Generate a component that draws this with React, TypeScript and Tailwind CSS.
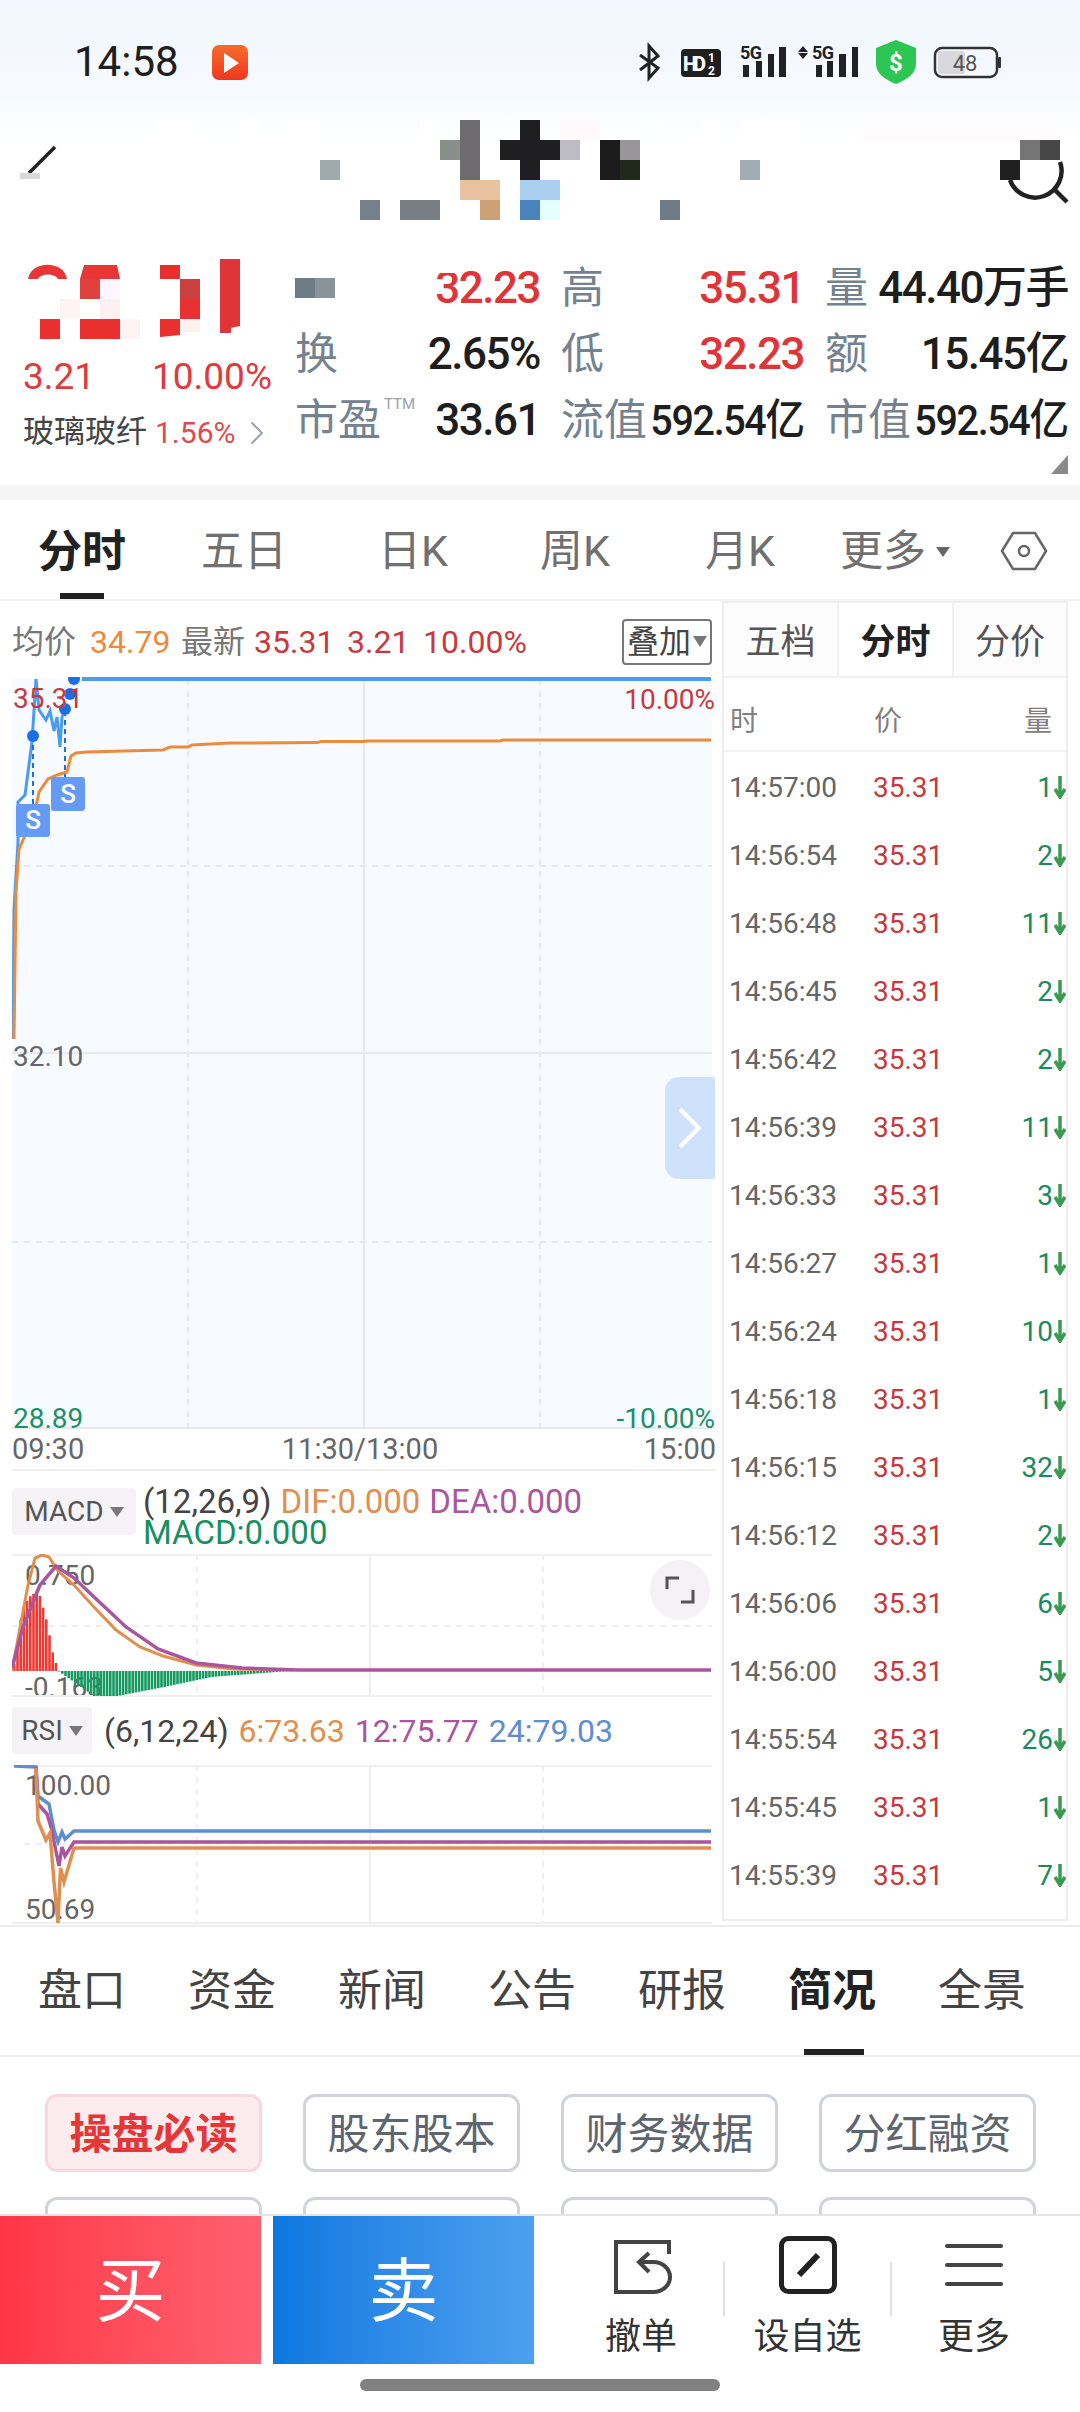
import { ChevronRight } from "lucide-react";

const trades = [
  ["14:57:00", "1"],
  ["14:56:54", "2"],
  ["14:56:48", "11"],
  ["14:56:45", "2"],
  ["14:56:42", "2"],
  ["14:56:39", "11"],
  ["14:56:33", "3"],
  ["14:56:27", "1"],
  ["14:56:24", "10"],
  ["14:56:18", "1"],
  ["14:56:15", "32"],
  ["14:56:12", "2"],
  ["14:56:06", "6"],
  ["14:56:00", "5"],
  ["14:55:54", "26"],
  ["14:55:45", "1"],
  ["14:55:39", "7"],
];

const periodTabs = [
  { label: "分时", w: "w-[164px]", active: true },
  { label: "五日", w: "w-[160px]" },
  { label: "日K", w: "w-[178px]" },
  { label: "周K", w: "w-[146px]" },
  { label: "月K", w: "w-[184px]" },
];

const infoTabs = ["盘口", "资金", "新闻", "公告", "研报", "简况", "全景"];
const chips = ["操盘必读", "股东股本", "财务数据", "分红融资"];

// mosaic over the stock name, page coords
const titleMosaic: [number, number, number, number, string][] = [
  [155, 120, 45, 20, "#ffffff"],
  [240, 120, 20, 20, "#ffffff"],
  [280, 120, 40, 20, "#ffffff"],
  [420, 120, 20, 20, "#ffffff"],
  [560, 120, 40, 20, "#fff9fb"],
  [640, 120, 20, 20, "#fbffff"],
  [700, 120, 20, 20, "#ffffff"],
  [740, 120, 60, 20, "#ffffff"],
  [860, 120, 200, 20, "#fffcfe"],
  [460, 120, 20, 60, "#6d6b6e"],
  [440, 140, 20, 20, "#8b8d88"],
  [520, 120, 20, 60, "#1f1f22"],
  [500, 140, 60, 20, "#1f1f22"],
  [560, 140, 20, 20, "#bdbcc4"],
  [600, 140, 20, 40, "#1c1c1c"],
  [620, 140, 20, 20, "#979597"],
  [620, 160, 20, 20, "#1f2a1d"],
  [320, 160, 20, 20, "#a0a9ae"],
  [740, 160, 20, 20, "#a0adb2"],
  [360, 200, 20, 20, "#75808a"],
  [400, 200, 40, 20, "#777f85"],
  [460, 180, 40, 20, "#e8c29f"],
  [480, 200, 20, 20, "#cd9f74"],
  [520, 180, 40, 20, "#abcff0"],
  [520, 200, 20, 20, "#4a82ba"],
  [540, 200, 20, 20, "#e4ffff"],
  [660, 200, 20, 20, "#6d7b86"],
  [1020, 140, 20, 20, "#757575"],
  [1040, 140, 20, 20, "#474747"],
  [1000, 160, 20, 20, "#202020"],
];

const blueLine = "M13 1040 L14 910 L18 843 L18 803 L25 796 L32 743 L36 680 L39 711 L46 721 L50 712 L54 732 L57 718 L60 748 L62 718 L65 711";
const avgLine = "M14 1040 L16 893 L19 850 L28 830 L37 803 L39 793 L48 780 L57 776 L67 773 L71 757 L76 754 L87 753 L124 752 L163 751 L170 748 L188 748 L192 746 L230 744 L317 743.6 L321 742.5 L363 742.5 L367 742 L500 742 L503 741 L711 741";

function lerp(points: [number, number][], x: number) {
  for (let i = 1; i < points.length; i++) {
    if (x <= points[i][0]) {
      const [x0, y0] = points[i - 1];
      const [x1, y1] = points[i];
      return y0 + ((y1 - y0) * (x - x0)) / (x1 - x0);
    }
  }
  return points[points.length - 1][1];
}

const redEnv: [number, number][] = [[12, 1672], [21, 1610], [28, 1598], [37, 1591], [46, 1624], [51, 1652], [57, 1672]];
const greenEnv: [number, number][] = [[57, 1672], [93, 1697], [116, 1697], [163, 1688], [210, 1678], [288, 1672]];

function MainChart() {
  return (
    <div className="relative h-[752px] w-[700px]">
      <svg viewBox="12 678 700 752" className="block h-full w-full">
        <rect x="12" y="680" width="700" height="750" fill="#f7faff" />
        <g stroke="#e6eaf0" strokeWidth="2" fill="none">
          <path d="M12 1054H712M364 680V1430M12 1429H712" />
          <path d="M12 867H712M12 1243H712M188 680V1430M540 680V1430" strokeDasharray="6 6" />
        </g>
        <path d="M82 680H711" stroke="#4a9cee" strokeWidth="4" />
        <path d={blueLine} stroke="#4a9cee" strokeWidth="3" fill="none" />
        <path d={avgLine} stroke="#ee8a3c" strokeWidth="3" fill="none" />
        <path d="M33 737V805M65 712V778" stroke="#1a6fe8" strokeWidth="2" strokeDasharray="5 4" />
        <g fill="#1a6fe8">
          <circle cx="33" cy="737" r="6" />
          <circle cx="65" cy="710" r="6" />
          <circle cx="70" cy="695" r="6" />
          <circle cx="74" cy="680" r="6" />
        </g>
      </svg>
      <span className="absolute left-[1px] top-[4px] text-[28px] leading-[36px] text-[#c8393e]">35.31</span>
      <span className="absolute right-[-3px] top-[5px] text-[28px] leading-[36px] text-[#c8393e]">10.00%</span>
      <span className="absolute left-[1px] top-[362px] text-[28px] leading-[36px] text-[#666666]">32.10</span>
      <span className="absolute left-[1px] bottom-[-8px] text-[28px] leading-[36px] text-[#1a9068]">28.89</span>
      <span className="absolute right-[-3px] bottom-[-8px] text-[28px] leading-[36px] text-[#1a9068]">-10.00%</span>
      <span className="absolute left-[4px] top-[127px] flex h-[33px] w-[34px] items-center justify-center rounded-[3px] bg-[#659bf5] text-[26px] font-medium text-white">S</span>
      <span className="absolute left-[39px] top-[100px] flex h-[34px] w-[34px] items-center justify-center rounded-[3px] bg-[#659bf5] text-[26px] font-medium text-white">S</span>
      <div className="absolute right-[-3px] top-[400px] flex h-[102px] w-[50px] items-center justify-center rounded-l-[14px] bg-[#cfe2fb]">
        <ChevronRight size={70} strokeWidth={1.4} className="shrink-0 text-white" />
      </div>
    </div>
  );
}

function MacdChart() {
  const bars: number[] = [];
  for (let x = 13; x < 288; x += 3.2) bars.push(x);
  return (
    <div className="relative h-[143px] w-[700px] overflow-hidden">
      <span className="absolute left-[13px] top-[4px] text-[28px] leading-[36px] text-[#666666]">0.750</span>
      <span className="absolute left-[13px] top-[116px] text-[28px] leading-[36px] text-[#666666]">-0.163</span>
      <svg viewBox="12 1555 700 143" className="absolute inset-0 h-full w-full">
        <g stroke="#efefef" strokeWidth="2" fill="none">
          <path d="M370 1555V1698M12 1556H712M12 1697H712" />
          <path d="M12 1627H712M197 1555V1698M543 1555V1698" strokeDasharray="6 6" />
        </g>
        {bars.map((x) => {
          const red = x < 57;
          const y = lerp(red ? redEnv : greenEnv, x);
          return red ? (
            <rect key={x} x={x} y={y} width="2.6" height={1672 - y} fill="#ee3a32" />
          ) : (
            <rect key={x} x={x} y={1672} width="2.6" height={y - 1672} fill="#169a62" />
          );
        })}
        <path d="M12 1672 L19 1634 L28 1586 L35 1559 L42 1556 L49 1558 L58 1572 L74 1586 L93 1607 L116 1631 L140 1648 L163 1657 L196 1666 L233 1670 L293 1671" stroke="#e08f4f" strokeWidth="3" fill="none" />
        <path d="M12 1669 L23 1628 L40 1586 L56 1567 L74 1579 L93 1597 L126 1628 L158 1650 L196 1664 L242 1669 L298 1671 L711 1671" stroke="#a9569f" strokeWidth="3.5" fill="none" />
      </svg>
      <div className="absolute left-[638px] top-[6px] flex h-[60px] w-[60px] items-center justify-center rounded-full bg-[#f5f2f5]">
        <svg width="30" height="28" viewBox="0 0 30 28" fill="none" stroke="#555555" strokeWidth="3">
          <path d="M2 13V2H14M16 26H28V14" />
        </svg>
      </div>
    </div>
  );
}

function RsiChart() {
  return (
    <div className="relative h-[159px] w-[700px] overflow-hidden">
      <span className="absolute left-[13px] top-[3px] text-[28px] leading-[36px] text-[#666666]">100.00</span>
      <span className="absolute left-[13px] top-[131px] text-[28px] leading-[28px] text-[#666666]">50.69</span>
      <svg viewBox="12 1766 700 159" className="absolute inset-0 h-full w-full">
        <g stroke="#efefef" strokeWidth="2" fill="none">
          <path d="M370 1766V1925M12 1767H712M12 1924H712" />
          <path d="M24 1845H712M197 1766V1925M543 1766V1925" strokeDasharray="6 6" />
        </g>
        <path d="M14 1767 L36 1768 L38 1797 L49 1805 L54 1831 L58 1843 L62 1833 L65 1840 L74 1832 L711 1832" stroke="#5f8ed0" strokeWidth="3.5" fill="none" />
        <path d="M36 1768 L38 1805 L47 1815 L51 1828 L59 1867 L62 1848 L65 1857 L74 1843 L711 1843" stroke="#a9569f" strokeWidth="3.5" fill="none" />
        <path d="M36 1769 L38 1822 L46 1841 L50 1834 L54 1883 L58 1924 L60.5 1869 L64 1883 L74 1849 L711 1849" stroke="#e08f4f" strokeWidth="3.5" fill="none" />
      </svg>
    </div>
  );
}

function StatusIcons() {
  return (
    <svg width="370" height="50" viewBox="635 38 370 50" className="block">
      {/* bluetooth */}
      <path d="M640 55 L658 68 L649 78 V46 L658 56 L640 70" fill="none" stroke="#222222" strokeWidth="3" />
      {/* HD badge */}
      <rect x="681" y="49" width="40" height="28" rx="4" fill="#1f1f1f" />
      <text x="683" y="71" fontSize="20" fontWeight="800" fill="#ffffff" textLength="23">HD</text>
      <text x="708" y="62" fontSize="12" fontWeight="700" fill="#ffffff">1</text>
      <text x="708" y="75" fontSize="12" fontWeight="700" fill="#ffffff">2</text>
      {/* sim 1 */}
      <text x="740" y="59" fontSize="18" fontWeight="700" fill="#222222" textLength="22">5G</text>
      <path d="M743 65h6v12h-6zM756 61h6v16h-6zM768 54h6v23h-6zM779 47h7v30h-7z" fill="#222222" />
      {/* sim 2 */}
      <path d="M798 52l5-6 5 6zM798 53l5 6 5-6z" fill="#222222" />
      <text x="812" y="59" fontSize="18" fontWeight="700" fill="#222222" textLength="22">5G</text>
      <path d="M816 65h6v12h-6zM827 61h6v16h-6zM839 54h7v23h-7zM852 47h6v30h-6z" fill="#222222" />
      {/* shield */}
      <path d="M896 40 L916 48 V64 C916 74 906 80 896 84 C886 80 876 74 876 64 V48 Z" fill="#2dc653" />
      <text x="896" y="71" textAnchor="middle" fontSize="24" fontWeight="700" fill="#ffffff">$</text>
      {/* battery */}
      <rect x="938" y="51" width="27" height="23" rx="3" fill="#d8d8dc" />
      <rect x="935" y="48" width="62" height="29" rx="7" fill="none" stroke="#333333" strokeWidth="2.5" />
      <text x="965" y="71" textAnchor="middle" fontSize="22" fill="#555555">48</text>
      <rect x="998" y="57" width="3" height="11" rx="1" fill="#333333" />
    </svg>
  );
}

function Header() {
  return (
    <div className="relative h-[240px] bg-gradient-to-b from-[#f1f6fe] via-[#f7faff] via-40% to-white to-60%">
      <div className="flex h-[120px] items-start pl-[74px] pt-[38px]">
        <span className="w-[138px] text-[42px] leading-[47px] text-[#1f1f1f]">14:58</span>
        <div className="mt-[7px] flex h-[35px] w-[36px] items-center justify-center rounded-[7px] bg-gradient-to-b from-[#f56b2c] to-[#f0341f]">
          <span className="ml-[3px] h-0 w-0 border-y-[10px] border-l-[15px] border-y-transparent border-l-white" />
        </div>
        <div className="ml-auto mr-[75px]">
          <StatusIcons />
        </div>
      </div>
      {/* title row: stock name is pixelated in the picture */}
      <svg viewBox="0 120 1080 120" className="block h-[120px] w-[1080px]">
        {titleMosaic.map(([x, y, w, h, c]) => (
          <rect key={`${x}-${y}`} x={x} y={y} width={w} height={h} fill={c} />
        ))}
        <path d="M55 147 L29 173" stroke="#222222" strokeWidth="3.5" />
        <rect x="20" y="173" width="20" height="6" fill="#d8d8d8" />
        <path d="M1010 180 A26 26 0 0 0 1060 162" fill="none" stroke="#222222" strokeWidth="4.5" />
        <path d="M1054 189 L1067 202" stroke="#222222" strokeWidth="4.5" />
      </svg>
    </div>
  );
}

function QuoteCell({ label, value, small, sup }: { label: string; value: string; small?: boolean; sup?: boolean }) {
  return (
    <div className="flex h-[66px] items-center justify-between">
      <span className="relative shrink-0 whitespace-nowrap text-[43px] leading-none text-[#748290]">
        {label}
        {sup && <span className="absolute left-[89px] top-[-2px] text-[15px] leading-[15px] text-[#98a2ac]">TTM</span>}
      </span>
      {small ? (
        <span className="-ml-[24px] shrink-0 origin-right scale-x-[0.92] whitespace-nowrap text-[43px] font-medium tracking-[-1.5px] text-[#1e1e1e]">{value}</span>
      ) : (
        <span className="whitespace-nowrap text-[44px] font-medium tracking-[-1.5px] text-[#1e1e1e]">{value}</span>
      )}
    </div>
  );
}

function RedCell({ label, value }: { label: string; value: string }) {
  return (
    <div className="flex h-[66px] items-center justify-between">
      <span className="text-[43px] leading-none text-[#748290]">{label}</span>
      <span className="text-[44px] font-medium tracking-[-1.5px] text-[#e03537]">{value}</span>
    </div>
  );
}

function Quote() {
  return (
    <div className="flex h-[245px] bg-white pt-[15px]">
      <div className="w-[295px] pl-[23px]">
        <svg width="240" height="90" viewBox="23 255 240 90" className="block">
          <path d="M28 279 C31 260 64 260 67 279 H58 C55 273 41 273 38 279 Z" fill="#e83535" />
          <path d="M84 265H117L120 279H80Z" fill="#e83535" />
          <rect x="80" y="279" width="20" height="20" fill="#e04040" />
          <rect x="100" y="279" width="20" height="20" fill="#fdf5ff" />
          <rect x="60" y="299" width="20" height="20" fill="#fef4f4" />
          <rect x="100" y="299" width="20" height="20" fill="#fdf0f2" />
          <rect x="120" y="319" width="20" height="20" fill="#fff4f4" />
          <rect x="40" y="319" width="20" height="20" fill="#ea2f2f" />
          <rect x="80" y="319" width="40" height="20" fill="#ea2f2f" />
          <rect x="160" y="265" width="20" height="14" fill="#ea2f2f" />
          <path d="M160 319H180V335L160 337Z" fill="#ea2f2f" />
          <rect x="180" y="279" width="20" height="20" fill="#c9403e" />
          <rect x="180" y="299" width="20" height="20" fill="#ea3030" />
          <rect x="180" y="319" width="20" height="13" fill="#fdf2f2" />
          <path d="M220 259H240V326L231 328V333H220Z" fill="#e03537" />
        </svg>
        <div className="flex h-[60px] w-[249px] items-center justify-between pt-[4px] text-[37px] text-[#df3a3c]">
          <span>3.21</span>
          <span>10.00%</span>
        </div>
        <div className="flex h-[50px] items-center pt-[5px] text-[31px] text-[#444444]">
          <span>玻璃玻纤</span>
          <span className="ml-[8px] text-[30px] text-[#df4a4c]">1.56%</span>
          <ChevronRight size={40} strokeWidth={1.2} className="ml-[2px] shrink-0 text-[#9aa4b0]" />
        </div>
      </div>
      <div className="relative grid h-[198px] w-[773px] grid-cols-[245px_243px_243px] content-start gap-x-[21px]">
        <div className="flex h-[66px] items-center justify-between">
          <svg width="40" height="20" className="block">
            <rect width="20" height="20" fill="#6d7b86" />
            <rect x="20" width="20" height="20" fill="#8a9299" />
          </svg>
          <span className="text-[44px] font-medium tracking-[-1.5px] text-[#e03537]">32.23</span>
        </div>
        <RedCell label="高" value="35.31" />
        <QuoteCell label="量" value="44.40万手" />
        <QuoteCell label="换" value="2.65%" />
        <RedCell label="低" value="32.23" />
        <QuoteCell label="额" value="15.45亿" />
        <QuoteCell label="市盈" value="33.61" sup />
        <QuoteCell label="流值" value="592.54亿" small />
        <QuoteCell label="市值" value="592.54亿" small />
        <span className="absolute left-[146px] top-[3px] h-[15px] w-[13px] bg-white" />
        <span className="absolute right-0 top-[200px] h-0 w-0 border-b-[19px] border-l-[17px] border-b-[#8a8a8a] border-l-transparent" />
      </div>
    </div>
  );
}

function PeriodTabs() {
  return (
    <div className="flex h-[101px] items-center border-b-2 border-[#f2f2f2] bg-white">
      {periodTabs.map((t) => (
        <div key={t.label} className={`relative flex h-full items-center justify-center pt-[4px] ${t.w}`}>
          <span className={t.active ? "text-[44px] font-bold text-[#222222]" : "text-[43px] text-[#707070]"}>{t.label}</span>
          {t.active && <span className="absolute bottom-0 left-[60px] h-[6px] w-[44px] bg-[#222222]" />}
        </div>
      ))}
      <div className="flex w-[126px] items-center justify-center pt-[4px] text-[43px] text-[#707070]">
        更多
        <span className="ml-[10px] h-0 w-0 border-x-[7px] border-t-[10px] border-x-transparent border-t-[#666666]" />
      </div>
      <div className="ml-[10px] flex w-[112px] items-center justify-center pt-[2px]">
        <svg width="48" height="42" viewBox="0 0 48 42" fill="none" stroke="#666666" strokeWidth="2.5">
          <path d="M13 3H35L46 21L35 39H13L2 21Z" />
          <circle cx="24" cy="21" r="5" />
        </svg>
      </div>
    </div>
  );
}

function ChartColumn() {
  return (
    <div className="w-[722px] pl-[12px]">
      <div className="flex h-[76px] w-[700px] items-center pt-[5px] text-[32px]">
        <span className="text-[#777777]">均价</span>
        <span className="ml-[14px] w-[91px] text-[#ee8a3c]">34.79</span>
        <span className="text-[#777777]">最新</span>
        <span className="ml-[9px] w-[93px] text-[#c8393e]">35.31</span>
        <span className="w-[76px] text-[#c8393e]">3.21</span>
        <span className="text-[#c8393e]">10.00%</span>
        <div className="ml-auto flex h-[46px] w-[90px] items-center justify-center gap-[2px] rounded-[4px] border-2 border-[#777777] text-[#444444]">
          <span>叠加</span>
          <span className="h-0 w-0 border-x-[7px] border-t-[11px] border-x-transparent border-t-[#777777]" />
        </div>
      </div>
      <MainChart />
      <div className="flex h-[42px] w-[704px] items-center justify-between border-b-2 border-[#eeeeee] pt-[2px] text-[29px] text-[#666666]">
        <span>09:30</span>
        <span className="-ml-[8px]">11:30/13:00</span>
        <span>15:00</span>
      </div>
      <div className="flex h-[83px] w-[700px] pt-[17px]">
        <div className="flex h-[47px] w-[124px] items-center justify-center gap-[6px] rounded-[4px] bg-[#f5f3f5] text-[28px] text-[#555555]">
          MACD
          <span className="h-0 w-0 border-x-[7px] border-t-[10px] border-x-transparent border-t-[#777777]" />
        </div>
        <div className="ml-[7px] -mt-[2px] text-[33px] leading-[31px]">
          <div className="flex gap-[9px] whitespace-nowrap">
            <span className="text-[#444444]">(12,26,9)</span>
            <span className="text-[#e08f4f]">DIF:0.000</span>
            <span className="text-[#a9569f]">DEA:0.000</span>
          </div>
          <div className="text-[#17905f]">MACD:0.000</div>
        </div>
      </div>
      <MacdChart />
      <div className="flex h-[68px] w-[700px] pt-[10px]">
        <div className="flex h-[47px] w-[80px] items-center justify-center gap-[6px] rounded-[4px] bg-[#f5f3f5] text-[28px] text-[#555555]">
          RSI
          <span className="h-0 w-0 border-x-[7px] border-t-[10px] border-x-transparent border-t-[#777777]" />
        </div>
        <div className="ml-[12px] flex h-[47px] items-center gap-[10px] text-[32px]">
          <span className="text-[#444444]">(6,12,24)</span>
          <span className="text-[#e08f4f]">6:73.63</span>
          <span className="text-[#a9569f]">12:75.77</span>
          <span className="text-[#5f8ed0]">24:79.03</span>
        </div>
      </div>
      <RsiChart />
    </div>
  );
}

function TradePanel() {
  return (
    <div className="h-[1320px] w-[346px] border-2 border-[#eeeeee] bg-white">
      <div className="flex h-[75px] border-b-2 border-[#f0f0f0] pt-0 text-[35px]">
        <div className="flex w-[115px] items-center justify-center border-r-2 border-[#f0f0f0] bg-[#fcfcfc] pt-[7px] text-[#555555]">五档</div>
        <div className="flex w-[115px] items-center justify-center border-r-2 border-[#f0f0f0] pt-[7px] font-bold text-[#222222]">分时</div>
        <div className="flex flex-1 items-center justify-center bg-[#fcfcfc] pt-[7px] text-[#555555]">分价</div>
      </div>
      <div className="flex h-[74px] items-center justify-between border-b-2 border-[#f2f2f2] pl-[6px] pr-[14px] pt-[15px] text-[28px] text-[#808080]">
        <span className="w-[144px]">时</span>
        <span className="flex-1">价</span>
        <span>量</span>
      </div>
      {trades.map(([time, qty]) => (
        <div key={time} className="flex h-[68px] items-center pl-[5px] pt-[3px] text-[28px]">
          <span className="w-[144px] text-[#666666]">{time}</span>
          <span className="text-[#c8393e]">35.31</span>
          <span className="ml-auto text-[#1a8a5f]">{qty}</span>
          <svg width="12" height="24" viewBox="0 0 12 24" className="mb-[2px] ml-[1px]" fill="none" stroke="#3a9a50" strokeWidth="3.5">
            <path d="M6 1V20M1 14L6 22L11 14" />
          </svg>
        </div>
      ))}
    </div>
  );
}

function InfoTabs() {
  return (
    <div className="flex h-[132px] border-b-2 border-t-2 border-[#ededed] bg-white px-[7px]">
      {infoTabs.map((t) => (
        <div key={t} className="relative flex w-[150px] items-center justify-center">
          <span className={t === "简况" ? "text-[44px] font-bold text-[#222222]" : "text-[44px] text-[#444444]"}>{t}</span>
          {t === "简况" && <span className="absolute bottom-0 left-[47px] h-[6px] w-[60px] bg-[#222222]" />}
        </div>
      ))}
    </div>
  );
}

function Chips() {
  return (
    <div className="h-[157px] overflow-hidden bg-white pl-[45px] pt-[37px]">
      <div className="grid w-[990px] grid-cols-[217px_217px_217px_217px] gap-x-[41px] gap-y-[25px]">
        {chips.map((c) => (
          <div
            key={c}
            className={
              c === "操盘必读"
                ? "flex h-[78px] items-center justify-center rounded-[12px] border-[3px] border-[#f8d8de] bg-[#fdeced] pt-[2px] text-[42px] font-bold text-[#e53638]"
                : "flex h-[78px] items-center justify-center rounded-[12px] border-[3px] border-[#d0d4da] pt-[2px] text-[42px] text-[#5d6670]"
            }
          >
            {c}
          </div>
        ))}
        {chips.map((c) => (
          <div key={`${c}-2`} className="h-[78px] rounded-[12px] border-[3px] border-[#d0d4da]" />
        ))}
      </div>
    </div>
  );
}

function BottomBar() {
  return (
    <div className="flex h-[150px] items-stretch border-t-2 border-[#e5e5e5] bg-white">
      <div className="flex w-[261px] items-center justify-center bg-gradient-to-r from-[#ff3545] to-[#ff6070] pt-[5px] text-[70px] text-white">买</div>
      <div className="ml-[12px] flex w-[261px] items-center justify-center bg-gradient-to-r from-[#0a78e0] to-[#4ca0ee] pt-[5px] text-[70px] text-white">卖</div>
      <div className="flex w-[189px] flex-col items-center pl-[25px] pt-[20px]">
        <svg width="64" height="62" viewBox="610 2236 64 62" fill="none" stroke="#444444" strokeWidth="4" className="ml-[3px]">
          <path d="M668 2254V2242H615V2292H652C662 2292 669 2285 669 2277C669 2269 662 2262 652 2262H640" />
          <path d="M648 2253L638 2262L648 2272" />
        </svg>
        <span className="mt-[17px] text-[36px] leading-[44px] text-[#333333]">撤单</span>
      </div>
      <div className="mt-[46px] h-[54px] w-[2px] bg-[#e0e0e0]" />
      <div className="flex w-[165px] flex-col items-center pt-[20px]">
        <svg width="64" height="62" viewBox="775 2236 64 62" fill="none" stroke="#222222">
          <rect x="780.5" y="2238.5" width="53" height="53" rx="7" strokeWidth="5" />
          <path d="M817 2255L798 2275" strokeWidth="6" />
        </svg>
        <span className="mt-[17px] text-[36px] leading-[44px] text-[#333333]">设自选</span>
      </div>
      <div className="mt-[46px] h-[54px] w-[2px] bg-[#e0e0e0]" />
      <div className="flex flex-1 flex-col items-center pr-[24px] pt-[20px]">
        <svg width="64" height="62" viewBox="942 2236 64 62" fill="none" stroke="#444444" strokeWidth="4" strokeLinecap="round">
          <path d="M947 2246H1001M947 2265H1001M947 2284H1001" />
        </svg>
        <span className="mt-[17px] text-[36px] leading-[44px] text-[#333333]">更多</span>
      </div>
    </div>
  );
}

export default function App() {
  return (
    <div className="h-[2412px] w-[1080px] overflow-hidden bg-white font-[family-name:Roboto,'Noto_Sans_CJK_SC',sans-serif]">
      <Header />
      <Quote />
      <div className="h-[15px] bg-[#f5f5f6]" />
      <PeriodTabs />
      <div className="flex h-[1324px]">
        <ChartColumn />
        <TradePanel />
      </div>
      <InfoTabs />
      <Chips />
      <BottomBar />
      <div className="flex justify-center pt-[15px]">
        <div className="h-[12px] w-[360px] rounded-full bg-[#808080]" />
      </div>
    </div>
  );
}
